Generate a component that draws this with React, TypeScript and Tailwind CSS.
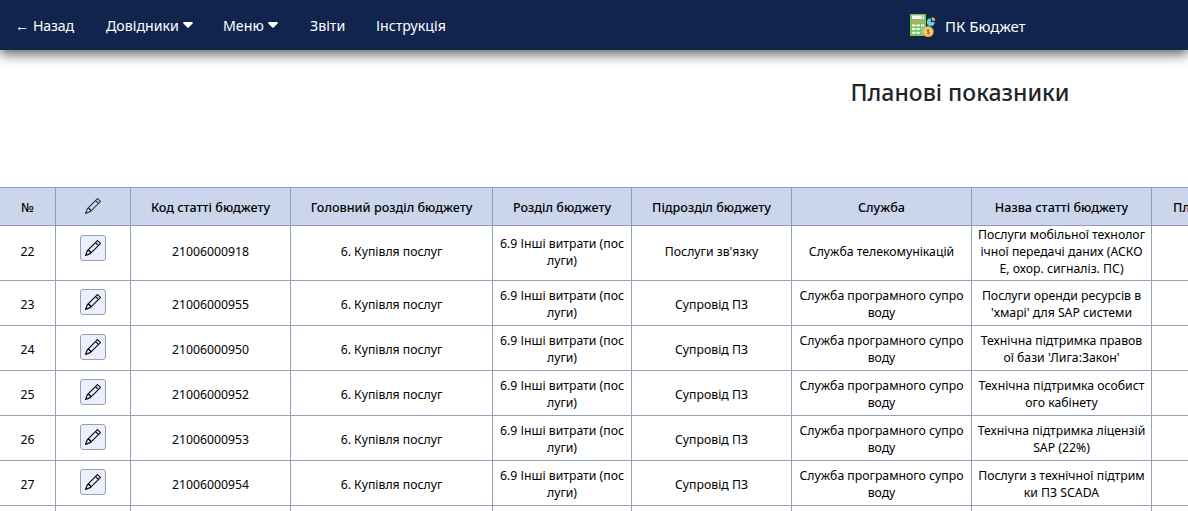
import type { ReactNode } from 'react';
import { BsPencil } from 'react-icons/bs';

type Row = {
  id: number;
  code: string;
  sub: string;
  service: string[];
  name: string[];
};

const program = ['Служба програмного супро', 'воду'];

const rows: Row[] = [
  {
    id: 22,
    code: '21006000918',
    sub: "Послуги зв'язку",
    service: ['Служба телекомунікацій'],
    name: ['Послуги мобільної технолог', 'ічної передачі даних (АСКО', 'Е, охор. сигналіз. ПС)'],
  },
  { id: 23, code: '21006000955', sub: 'Супровід ПЗ', service: program, name: ['Послуги оренди ресурсів в', "'хмарі' для SAP системи"] },
  { id: 24, code: '21006000950', sub: 'Супровід ПЗ', service: program, name: ['Технічна підтримка правов', "ої бази 'Лига:Закон'"] },
  { id: 25, code: '21006000952', sub: 'Супровід ПЗ', service: program, name: ['Технічна підтримка особист', 'ого кабінету'] },
  { id: 26, code: '21006000953', sub: 'Супровід ПЗ', service: program, name: ['Технічна підтримка ліцензій', 'SAP (22%)'] },
  { id: 27, code: '21006000954', sub: 'Супровід ПЗ', service: program, name: ['Послуги з технічної підтрим', 'ки ПЗ SCADA'] },
];

const columns =
  'grid w-[1212px] grid-cols-[56px_75px_160px_202px_139px_160px_180px_180px_60px]';

function Caret() {
  return (
    <svg className="ml-1 h-[6px] w-[10px]" viewBox="0 0 10 6" fill="currentColor">
      <path d="M1 0h8a.8.8 0 0 1 .6 1.4L5.6 5.6a.8.8 0 0 1-1.2 0L.4 1.4A.8.8 0 0 1 1 0z" />
    </svg>
  );
}

function Logo() {
  return (
    <svg className="mt-[2px] h-[26px] w-[26px]" viewBox="0 0 26 26">
      <rect x="0" y="1" width="16" height="22" rx="0.6" fill="#7cc35b" />
      <rect x="2" y="2.5" width="12" height="3.5" fill="#f5f7f2" />
      <rect x="11.6" y="3" width="1.2" height="2.4" fill="#9aa59a" />
      <g fill="#ef8f78">
        <rect x="2" y="8" width="3.4" height="1.8" />
        <rect x="6.4" y="8" width="3.4" height="1.8" />
        <rect x="10.8" y="8" width="3.4" height="1.8" />
      </g>
      <g fill="#f5f7f2">
        <rect x="2" y="11.4" width="3.4" height="2" />
        <rect x="6.4" y="11.4" width="3.4" height="2" />
        <rect x="10.8" y="11.4" width="3.4" height="2" />
        <rect x="2" y="15" width="3.4" height="2" />
        <rect x="6.4" y="15" width="3.4" height="2" />
        <rect x="2" y="18.8" width="3.4" height="2" />
        <rect x="6.4" y="18.8" width="3.4" height="2" />
      </g>
      <rect x="11" y="14.5" width="3" height="6" fill="#62d5dc" />
      <path d="M20.8 5.2v3.8h3.8a3.9 3.9 0 1 1-3.8-3.8z" fill="#5fd3e6" />
      <path d="M21.8 4.2a3.6 3.6 0 0 1 3.4 3.6h-3.4z" fill="#f6b73c" />
      <circle cx="18.2" cy="18.6" r="5.5" fill="#f0b440" />
      <circle cx="18.2" cy="18.6" r="3.9" fill="#fad27a" />
      <path
        d="M19.8 17.3c-.6-1-3.2-1-3.2.2s3.2.9 3.2 2.2-2.7 1.3-3.3.2M18.2 15.9v5.6"
        fill="none"
        stroke="#94703a"
        strokeWidth="1"
      />
    </svg>
  );
}

function Cell({ lines, className = '' }: { lines: string[]; className?: string }) {
  return (
    <div className={`flex flex-col items-center justify-center whitespace-nowrap border-b border-r border-[#94a3b8] ${className}`}>
      {lines.map((line) => (
        <span key={line}>{line}</span>
      ))}
    </div>
  );
}

function HeadCell({ children }: { children: ReactNode }) {
  return (
    <div className="flex items-center justify-center whitespace-nowrap border-y border-r border-[#8e9cb5] pt-px">
      {children}
    </div>
  );
}

export default function App() {
  return (
    <div className="h-[511px] w-full overflow-hidden bg-white font-['Noto_Sans','Open_Sans',sans-serif] text-black">
      <header className="flex h-[50px] items-center bg-[#11244d] pl-[15px] text-[14.2px] text-white shadow-[0_4px_12px_rgba(0,0,0,0.65)]">
        <nav className="flex items-center whitespace-nowrap pt-px">
          <a className="flex w-[91px] tracking-[-0.2px]"><span className="w-[18px]">←</span>Назад</a>
          <a className="flex w-[117px] items-center">Довідники<Caret /></a>
          <a className="flex w-[87px] items-center">Меню<Caret /></a>
          <a className="w-[66px]">Звіти</a>
          <a className="w-[534px]">Інструкція</a>
        </nav>
        <div className="flex items-center gap-[9px] whitespace-nowrap">
          <Logo />
          <span className="pt-[3px] text-[15px]">ПК Бюджет</span>
        </div>
      </header>

      <h1 className="flex h-[137px] w-[1920px] justify-center pt-[26px] text-[23px] font-medium leading-8 text-[#212529]">
        Планові показники
      </h1>

      <div className="text-[12.25px] leading-[17px]">
        <div className={`${columns} h-[39px] bg-[#cbd5ec] text-[12.6px] font-medium`}>
          <HeadCell>№</HeadCell>
          <HeadCell><BsPencil className="mb-[2px] size-4 text-[#212529]" /></HeadCell>
          <HeadCell>Код статті бюджету</HeadCell>
          <HeadCell>Головний розділ бюджету</HeadCell>
          <HeadCell>Розділ бюджету</HeadCell>
          <HeadCell>Підрозділ бюджету</HeadCell>
          <HeadCell>Служба</HeadCell>
          <HeadCell>Назва статті бюджету</HeadCell>
          <HeadCell>Пл</HeadCell>
        </div>
        {rows.map((row) => {
          const pad = row.id === 22 ? 'pb-[3px]' : 'pt-[2px]';
          return (
            <div key={row.id} className={`${columns} ${row.id === 22 ? 'h-[55px]' : 'h-[45px]'}`}>
              <Cell className={pad} lines={[String(row.id)]} />
              <div className={`flex justify-center border-b border-r border-[#94a3b8] ${row.id === 22 ? 'pt-[9px]' : 'pt-[8px]'}`}>
                <button className="flex size-[26px] items-center justify-center rounded-[3px] border border-[#9c9eaa] bg-[#eceffd]">
                  <BsPencil className="size-4 stroke-[0.15] text-black" />
                </button>
              </div>
              <Cell className={pad} lines={[row.code]} />
              <Cell className={pad} lines={['6. Купівля послуг']} />
              <Cell className={pad} lines={['6.9 Інші витрати (пос', 'луги)']} />
              <Cell className={pad} lines={[row.sub]} />
              <Cell className={pad} lines={row.service} />
              <Cell className={pad} lines={row.name} />
              <Cell lines={[]} />
            </div>
          );
        })}
        <div className={`${columns} h-[45px]`}>
          {Array.from({ length: 9 }, (_, i) => (
            <Cell key={i} lines={[]} />
          ))}
        </div>
      </div>
    </div>
  );
}
